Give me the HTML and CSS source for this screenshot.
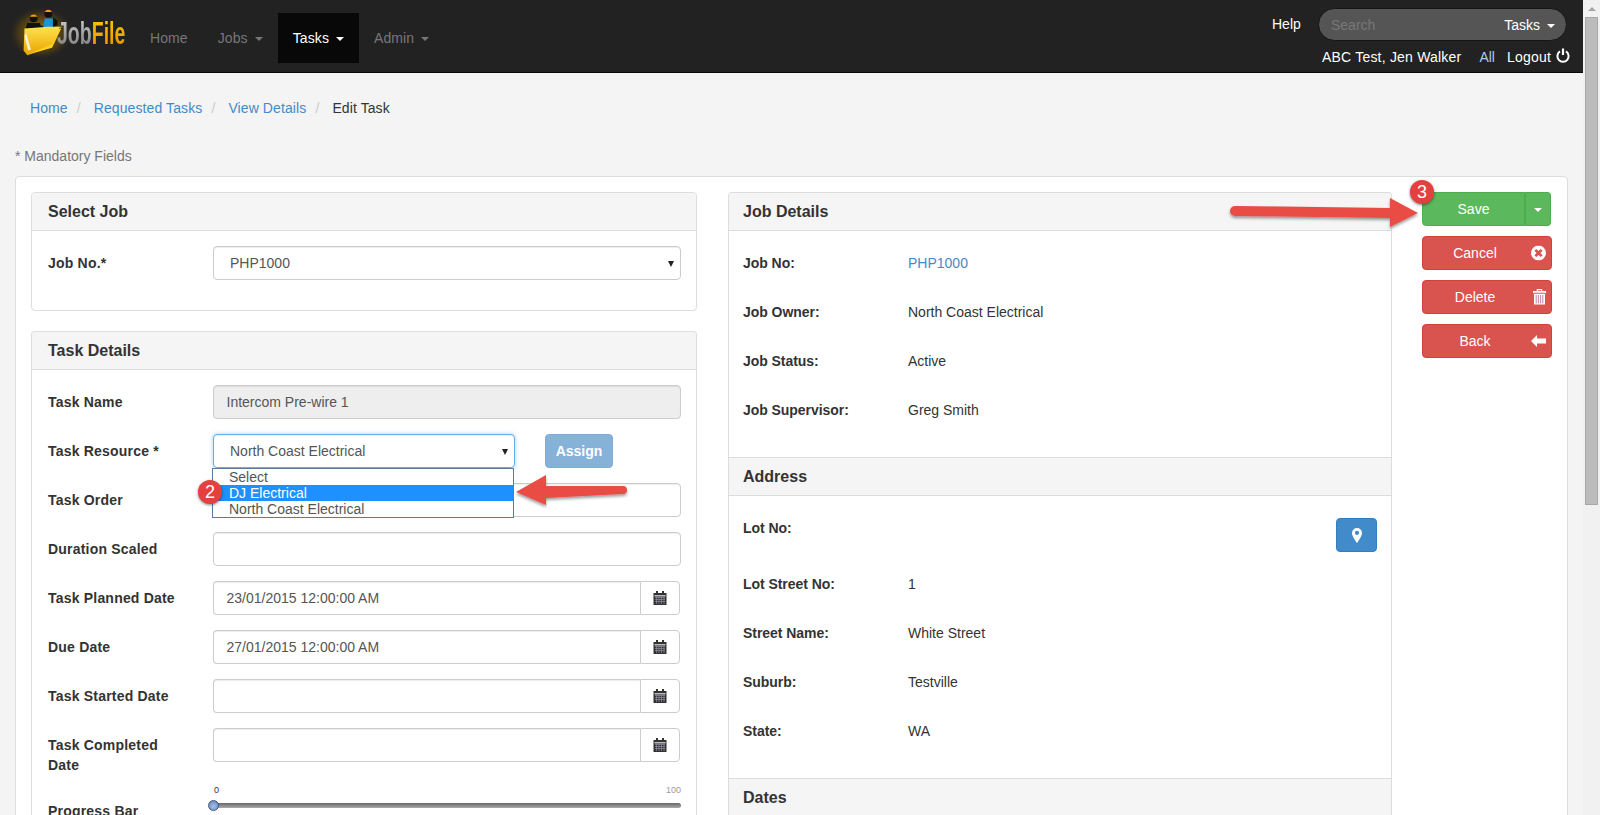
FILE: index.html
```html
<!DOCTYPE html>
<html lang="en">
<head>
<meta charset="utf-8">
<title>JobFile - Edit Task</title>
<link rel="stylesheet" href="styles.css">
</head>
<body>
<div class="window">
  <div class="page">
    <header class="navbar">
      <a class="brand">
        <svg class="brand-mark" width="66" height="57" viewBox="0 0 72 62">
          <defs>
            <radialGradient id="glow" cx="50%" cy="55%" r="50%"><stop offset="0" stop-color="#e8a800" stop-opacity=".75"/><stop offset=".7" stop-color="#a87400" stop-opacity=".25"/><stop offset="1" stop-color="#222" stop-opacity="0"/></radialGradient>
            <linearGradient id="fold" x1="0" y1="0" x2="0" y2="1"><stop offset="0" stop-color="#ffe14d"/><stop offset="1" stop-color="#e8a400"/></linearGradient>
          </defs>
          <ellipse cx="36" cy="32" rx="36" ry="30" fill="url(#glow)"/>
          <circle cx="28" cy="19" r="4.2" fill="#111"/>
          <path d="M24 17a4.5 4.5 0 0 1 8 0z" fill="#f5a000"/>
          <path d="M21 24h14l2 10H18z" fill="#111"/>
          <path d="M32 26l12 2 1 3-13-1z" fill="#111"/>
          <circle cx="44" cy="14" r="4.2" fill="#111"/>
          <path d="M40 12a4.5 4.5 0 0 1 8 0z" fill="#f5a000"/>
          <path d="M40 19h10l2 12H38z" fill="#1b95d8"/>
          <path d="M49 18l5 3 0 5-5 3z" fill="#111"/>
          <path d="M18 30l26-2 14 0-3 3 3-1-10 20-27 9-4-5z" fill="url(#fold)"/>
          <path d="M20 35l5 18-3 1-4-16z" fill="#f4f0d8"/>
          <path d="M60 25L48 51 22 58l26-11z" fill="#ffd21a"/>
        </svg>
        <span class="brand-text"><span class="brand-job">Job</span><span class="brand-file">File</span></span>
      </a>
      <nav class="nav">
        <a class="nav-item">Home</a>
        <a class="nav-item">Jobs<i class="caret"></i></a>
        <a class="nav-item is-active">Tasks<i class="caret"></i></a>
        <a class="nav-item">Admin<i class="caret"></i></a>
      </nav>
      <div class="nav-right">
        <div class="nav-right-top">
          <a class="help">Help</a>
          <div class="search"><span class="search-ph">Search</span><span class="search-scope">Tasks<i class="caret"></i></span></div>
        </div>
        <div class="nav-right-bottom">
          <span class="nav-user">ABC Test, Jen Walker</span>
          <a class="all">All</a>
          <a class="logout">Logout
            <svg class="power" width="14" height="15" viewBox="0 0 14 15"><path d="M4 3.4a5.6 5.6 0 1 0 6 0" fill="none" stroke="#fff" stroke-width="2"/><path d="M7 .5v6.5" stroke="#fff" stroke-width="2.2"/></svg>
          </a>
        </div>
      </div>
    </header>

    <ol class="crumbs">
      <li><a>Home</a></li>
      <li><a>Requested Tasks</a></li>
      <li><a>View Details</a></li>
      <li class="crumb-current">Edit Task</li>
    </ol>
    <p class="mandatory">* Mandatory Fields</p>

    <main class="card">
      <section class="col-left">
        <div class="panel">
          <h3 class="panel-heading">Select Job</h3>
          <div class="panel-body">
            <div class="form-row">
              <label class="form-label">Job No.*</label>
              <div class="select full">PHP1000<i class="select-arrow"></i></div>
            </div>
          </div>
        </div>

        <div class="panel panel-open">
          <h3 class="panel-heading">Task Details</h3>
          <div class="panel-body">
            <div class="form-row">
              <label class="form-label">Task Name</label>
              <div class="input full is-disabled">Intercom Pre-wire 1</div>
            </div>
            <div class="form-row">
              <label class="form-label">Task Resource *</label>
              <div class="select resource is-focus">North Coast Electrical<i class="select-arrow"></i></div>
              <button class="btn-assign">Assign</button>
              <ul class="dropdown">
                <li>Select</li>
                <li class="is-hover">DJ Electrical</li>
                <li>North Coast Electrical</li>
              </ul>
            </div>
            <div class="form-row">
              <label class="form-label">Task Order</label>
              <div class="input full"></div>
            </div>
            <div class="form-row">
              <label class="form-label">Duration Scaled</label>
              <div class="input full"></div>
            </div>
            <div class="form-row">
              <label class="form-label">Task Planned Date</label>
              <div class="date"><div class="date-input">23/01/2015 12:00:00 AM</div><span class="date-addon"><svg class="cal" width="14" height="14" viewBox="0 0 14 14"><use href="#cal-icon"/></svg></span></div>
            </div>
            <div class="form-row">
              <label class="form-label">Due Date</label>
              <div class="date"><div class="date-input">27/01/2015 12:00:00 AM</div><span class="date-addon"><svg class="cal" width="14" height="14" viewBox="0 0 14 14"><use href="#cal-icon"/></svg></span></div>
            </div>
            <div class="form-row">
              <label class="form-label">Task Started Date</label>
              <div class="date"><div class="date-input"></div><span class="date-addon"><svg class="cal" width="14" height="14" viewBox="0 0 14 14"><use href="#cal-icon"/></svg></span></div>
            </div>
            <div class="form-row">
              <label class="form-label wrap">Task Completed Date</label>
              <div class="date"><div class="date-input"></div><span class="date-addon"><svg class="cal" width="14" height="14" viewBox="0 0 14 14"><use href="#cal-icon"/></svg></span></div>
            </div>
            <div class="form-row slider-row">
              <label class="form-label slider-label">Progress Bar</label>
              <div class="slider">
                <div class="slider-scale"><span>0</span><span class="scale-max">100</span></div>
                <div class="slider-track"><i class="slider-handle"></i></div>
              </div>
            </div>
          </div>
        </div>
      </section>

      <section class="col-right">
        <div class="panel panel-open">
          <h3 class="panel-heading">Job Details</h3>
          <div class="panel-body">
            <div class="info-row"><span class="info-label">Job No:</span><a class="info-link">PHP1000</a></div>
            <div class="info-row"><span class="info-label">Job Owner:</span><span>North Coast Electrical</span></div>
            <div class="info-row"><span class="info-label">Job Status:</span><span>Active</span></div>
            <div class="info-row"><span class="info-label">Job Supervisor:</span><span>Greg Smith</span></div>
          </div>
          <h3 class="panel-heading inner">Address</h3>
          <div class="panel-body">
            <div class="info-row lot-row">
              <span class="info-label">Lot No:</span>
              <button class="btn-map">
                <svg width="12" height="15" viewBox="0 0 12 15"><path d="M6 0a5 5 0 0 0-5 5c0 3.5 5 10 5 10s5-6.500 5-10a5 5 0 0 0-5-5zm0 7a2.100 2.100 0 1 1 0-4.200 2.100 2.100 0 0 1 0 4.200z" fill="#fff"/></svg>
              </button>
            </div>
            <div class="info-row"><span class="info-label">Lot Street No:</span><span>1</span></div>
            <div class="info-row"><span class="info-label">Street Name:</span><span>White Street</span></div>
            <div class="info-row"><span class="info-label">Suburb:</span><span>Testville</span></div>
            <div class="info-row"><span class="info-label">State:</span><span>WA</span></div>
          </div>
          <h3 class="panel-heading inner">Dates</h3>
        </div>
      </section>

      <aside class="actions">
        <div class="btn-split">
          <button class="btn btn-save">Save</button>
          <button class="btn btn-save btn-toggle"><i class="caret"></i></button>
        </div>
        <button class="btn btn-danger">Cancel
          <svg class="btn-icon" width="15" height="15" viewBox="0 0 15 15"><path fill-rule="evenodd" d="M7.500 0a7.500 7.500 0 1 1 0 15 7.500 7.500 0 0 1 0-15zM5.300 3.400L3.400 5.300l2.200 2.200-2.200 2.200 1.900 1.900 2.200-2.200 2.200 2.200 1.900-1.900-2.200-2.200 2.200-2.200-1.900-1.900-2.200 2.200z" fill="#fff"/></svg>
        </button>
        <button class="btn btn-danger">Delete
          <svg class="btn-icon" width="13" height="16" viewBox="0 0 13 16"><path d="M0 2.500h13v1.300H0zM4.300 2.500V.6h4.400v1.900" fill="none" stroke="#fff" stroke-width="1.100"/><path d="M1 5h11v10.500H1z" fill="#fff"/><path d="M3.200 6v8.500M5.400 6v8.500M7.600 6v8.500M9.800 6v8.500" stroke="#c98fb0" stroke-width="1.100"/></svg>
        </button>
        <button class="btn btn-danger">Back
          <svg class="btn-icon" width="15" height="12" viewBox="0 0 15 12"><path d="M0 6l6-6v3.500h9v5H6V12z" fill="#fff"/></svg>
        </button>
      </aside>
    </main>
  </div>

  <div class="scrollbar">
    <i class="scroll-up"></i>
    <div class="scroll-thumb"></div>
  </div>
</div>

<svg class="arrow-art" width="1583" height="815" viewBox="0 0 1583 815">
  <defs>
    <filter id="soft" x="-10%" y="-30%" width="120%" height="170%"><feDropShadow dx="0" dy="2" stdDeviation="1.600" flood-color="#000" flood-opacity=".4"/></filter>
  </defs>
  <path d="M1235 206L1390 208V198L1418 213L1390 227V218L1235 216a5 5 0 0 1 0-10z" fill="#e94c45" filter="url(#soft)"/>
  <path d="M516 492L546 475V486L623 486a4 4 0 0 1 0 8L546 498V505z" fill="#e94c45" filter="url(#soft)"/>
</svg>
<span class="badge badge-two">2</span>
<span class="badge badge-three">3</span>

<svg class="defs-only" width="0" height="0">
  <symbol id="cal-icon" viewBox="0 0 14 14">
    <rect x="0.500" y="2" width="13" height="12" fill="#333"/>
    <rect x="3" y="0" width="2" height="3" fill="#333"/>
    <rect x="9" y="0" width="2" height="3" fill="#333"/>
    <rect x="1.500" y="4" width="11" height="1.500" fill="#bbb"/>
    <path d="M2 6.500h10M2 8.500h10M2 10.500h10M3.500 6v7M6 6v7M8.500 6v7M11 6v7" stroke="#889" stroke-width=".8"/>
  </symbol>
</svg>
</body>
</html>
```

FILE: styles.css
```css
* { box-sizing: border-box; }
html, body { margin: 0; height: 815px; overflow: hidden; }
body {
  font-family: "Liberation Sans", Arial, sans-serif;
  font-size: 14px;
  line-height: 20px;
  color: #333;
  background: #f4f4f4;
  position: relative;
}
a { color: #428bca; text-decoration: none; }
i { font-style: normal; }

.window { display: flex; height: 815px; }
.page { width: 1583px; flex: none; height: 815px; overflow: hidden; }

/* Navbar */
.navbar {
  height: 73px;
  background: #222;
  border-bottom: 1px solid #080808;
  display: flex;
  align-items: flex-start;
}
.brand { display: flex; align-items: center; height: 72px; width: 135px; padding-left: 8px; flex: none; }
.brand-mark { flex: none; margin-right: -17px; margin-top: -14px; }
.brand-text {
  font-family: "Liberation Sans", sans-serif;
  font-weight: 700;
  font-size: 31px;
  line-height: 32px;
  transform: scaleX(.63);
  transform-origin: left;
  margin-top: -5px;
  white-space: nowrap;
}
.brand-job, .brand-file { -webkit-background-clip: text; background-clip: text; color: transparent; }
.brand-job { background-image: linear-gradient(#d0d0d0, #777); }
.brand-file { background-image: linear-gradient(#ffcc00, #e58a00); }

.nav { display: flex; margin-top: 13px; letter-spacing: .1px; }
.nav-item { height: 50px; padding: 15px; color: #777; display: block; }
.nav-item.is-active { background: #080808; color: #fff; }
.caret {
  display: inline-block;
  width: 0; height: 0;
  margin-left: 7px;
  vertical-align: middle;
  border-top: 4px solid currentColor;
  border-left: 4px solid transparent;
  border-right: 4px solid transparent;
}

.nav-right { margin-left: auto; width: 311px; margin-right: 16px; color: #fff; flex: none; }
.nav-right-top { display: flex; margin-top: 8px; height: 33px; }
.help { color: #fff; margin-left: 16px; margin-top: 6px; width: 46px; }
.search {
  width: 249px; height: 33px;
  background: #555;
  border: 1px solid #151515;
  border-radius: 17px;
  display: flex;
  justify-content: space-between;
  align-items: center;
  padding: 1px 11px 0 12px;
}
.search-ph { color: #777; }
.search-scope { color: #fff; }
.nav-right-bottom { display: flex; align-items: center; margin-top: 6px; height: 20px; padding-left: 66px; }
.nav-user { white-space: nowrap; letter-spacing: .2px; }
.all { color: #a8cdeb; margin-left: 18px; }
.logout { color: #fff; margin-left: 12px; display: flex; align-items: center; white-space: nowrap; letter-spacing: .2px; }
.power { margin-left: 5px; margin-top: -3px; }

/* Breadcrumb */
.crumbs { list-style: none; margin: 0; padding: 25px 0 0 30px; display: flex; height: 45px; letter-spacing: .1px; }
.crumbs li + li::before { content: "/"; color: #ccc; padding: 0 13px 0 9px; }
.crumb-current { color: #333; }
.mandatory { margin: 28px 0 0 15px; color: #777; height: 20px; }

/* Main card */
.card {
  margin: 10px 15px 0 15px;
  background: #fff;
  border: 1px solid #ddd;
  border-radius: 4px;
  padding: 15px;
  display: flex;
  height: 700px;
}
.col-left { width: 666px; flex: none; }
.col-right { width: 664px; flex: none; margin-left: 31px; }
.actions { width: 130px; flex: none; margin-left: 30px; display: flex; flex-direction: column; gap: 10px; }

.panel { border: 1px solid #ddd; border-radius: 4px; margin-bottom: 20px; background: #fff; }
.panel-open { border-bottom: 0; border-radius: 4px 4px 0 0; margin-bottom: 0; }
.panel-heading {
  margin: 0;
  height: 38px;
  padding: 8px 15px 8px 16px;
  background: #f5f5f5;
  border-bottom: 1px solid #ddd;
  border-radius: 3px 3px 0 0;
  font-size: 16px;
  line-height: 21px;
  font-weight: 700;
  color: #333;
}
.col-right .panel-heading { padding-left: 14px; }
.panel-heading.inner { border-top: 1px solid #ddd; border-radius: 0; height: 39px; }
.panel-body { padding: 15px 15px 15px; }
.col-right .panel-body { padding-left: 14px; }

/* Form */
.form-row { display: flex; position: relative; margin-bottom: 15px; height: 34px; }
.form-label { width: 166px; flex: none; padding: 7px 0 0 1px; font-weight: 700; letter-spacing: .2px; }
.form-label.wrap { padding-right: 36px; }
.input, .select, .date-input {
  height: 34px;
  border: 1px solid #ccc;
  border-radius: 4px;
  background: #fff;
  color: #555;
  line-height: 20px;
  padding: 6px 12.5px;
  box-shadow: inset 0 1px 1px rgba(0,0,0,.075);
}
.full { width: 468px; }
.select { padding-left: 16px; position: relative; }
.select-arrow {
  position: absolute; right: 6px; top: 14px;
  border-top: 6px solid #222;
  border-left: 3.5px solid transparent;
  border-right: 3.5px solid transparent;
}
.is-disabled { background: #eee; }
.resource { width: 302px; }
.is-focus { border-color: #66afe9; box-shadow: inset 0 1px 1px rgba(0,0,0,.075), 0 0 4px rgba(102,175,233,.6); }
.btn-assign {
  margin-left: 30px;
  width: 68px; height: 34px;
  border: 1px solid #7fadd6;
  border-radius: 4px;
  background: #86b2da;
  color: #fff;
  font: 700 14px/20px "Liberation Sans", sans-serif;
  padding: 0;
}
.dropdown {
  position: absolute;
  left: 165px; top: 34px;
  width: 302px;
  margin: 0; padding: 0;
  list-style: none;
  background: #fff;
  border: 1px solid #5a7ba0;
  z-index: 3;
  color: #555;
  line-height: 16px;
}
.dropdown li { height: 16px; padding-left: 16px; }
.dropdown .is-hover { background: #1e90ff; color: #fff; }

.date { display: flex; width: 467px; }
.date-input { flex: 1; border-radius: 4px 0 0 4px; border-right: 0; }
.date-addon {
  width: 40px; height: 34px;
  border: 1px solid #ccc;
  border-radius: 0 4px 4px 0;
  display: flex; align-items: center; justify-content: center;
  background: #fff;
}
.slider-row { margin-top: -2px; height: 44px; }
.slider-label { padding-top: 26px; }
.slider { width: 468px; margin-top: 10px; position: relative; }
.slider-scale { display: flex; justify-content: space-between; font-size: 9px; line-height: 10px; color: #333; height: 17px; padding-left: 1px; }
.scale-max { color: #999; }
.slider-track {
  height: 5px;
  background: linear-gradient(#666, #aaa);
  border-radius: 3px;
  position: relative;
  margin-top: 1px;
}
.slider-handle {
  position: absolute;
  left: -5px; top: -3px;
  width: 11px; height: 11px;
  border-radius: 50%;
  border: 1px solid #3c5a8c;
  background: radial-gradient(circle at 50% 60%, #a9c0e4, #5c7fb5);
}

/* Info rows */
.info-row { display: flex; align-items: center; height: 34px; margin-bottom: 15px; color: #333; }
.info-label { width: 165px; flex: none; font-weight: 700; letter-spacing: -.05px; }
.info-link { color: #428bca; }
.lot-row { height: 42px; align-items: flex-start; justify-content: space-between; padding-top: 7px; margin-bottom: 14px; }
.lot-row .info-label { line-height: 20px; }
.btn-map {
  width: 41px; height: 34px;
  margin-right: -1px;
  background: #428bca;
  border: 1px solid #357ebd;
  border-radius: 4px;
  padding: 0;
  display: flex; align-items: center; justify-content: center;
}

/* Actions */
.btn {
  height: 34px;
  border-radius: 4px;
  color: #fff;
  font: 400 14px/20px "Liberation Sans", sans-serif;
  padding: 0;
  position: relative;
  text-align: center;
}
.btn-danger { background: #d9534f; border: 1px solid #d43f3a; padding-right: 24px; }
.btn-icon { position: absolute; right: 5px; top: 50%; transform: translateY(-50%); }
.btn-split { display: flex; width: 129px; }
.btn-save { background: #5cb85c; border: 1px solid #4cae4c; flex: 1; border-radius: 4px 0 0 4px; }
.btn-toggle { flex: none; width: 26px; border-left: 0; border-radius: 0 4px 4px 0; box-shadow: inset 1px 0 0 #4cae4c; }
.btn-toggle .caret { margin: 0; }

/* Scrollbar */
.scrollbar { width: 17px; flex: none; background: #f1f1f1; position: relative; padding: 17px 2px 0 2px; }
.scroll-up { position: absolute; left: 5px; top: 7px; border-bottom: 4px solid #a3a3a3; border-left: 4px solid transparent; border-right: 4px solid transparent; }
.scroll-thumb { height: 488px; background: #bcbcbc; border: 1px solid #a8a8a8; }

/* Annotations laid over the page */
.arrow-art { position: absolute; left: 0; top: 0; pointer-events: none; z-index: 4; }
.defs-only { position: absolute; }
.badge {
  position: absolute;
  width: 24px; height: 24px;
  border-radius: 50%;
  background: #e5403f;
  color: #fff;
  font-size: 18px;
  line-height: 24px;
  text-align: center;
  box-shadow: 0 1px 3px rgba(0,0,0,.5);
  z-index: 5;
}
.badge-two { left: 198px; top: 480px; }
.badge-three { left: 1410px; top: 180px; }
```
